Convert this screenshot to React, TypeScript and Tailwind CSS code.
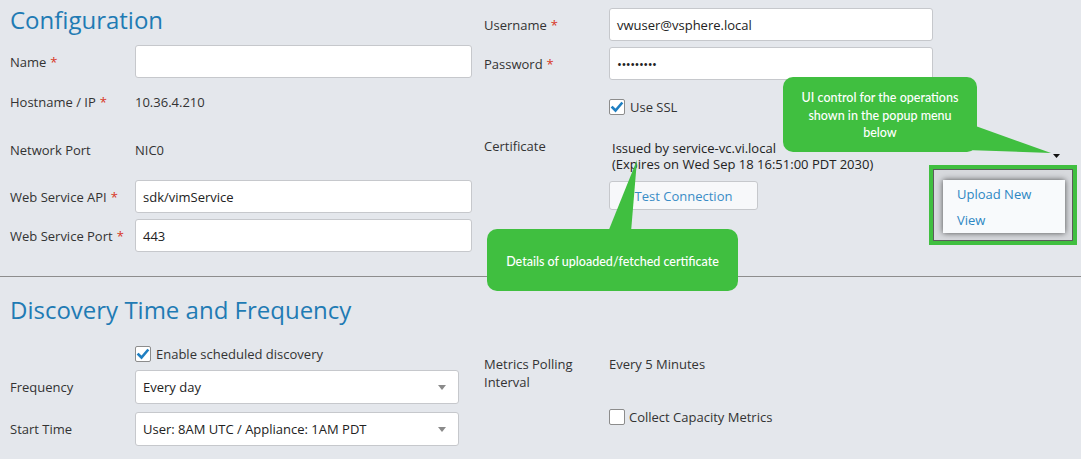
import React from "react";

const Req = () => <span className="ml-[4px] text-[#d8361f]">*</span>;

function CheckBox({ checked }: { checked?: boolean }) {
  return (
    <span className="flex h-[16px] w-[16px] shrink-0 items-center justify-center rounded-[2px] border border-[#8c8c8c] bg-white">
      {checked && (
        <svg width="14" height="14" viewBox="0 0 14 14">
          <polyline
            points="2.5,7.5 5.5,10.5 11.5,3.5"
            fill="none"
            stroke="#1f7fc2"
            strokeWidth="2.6"
            strokeLinecap="square"
          />
        </svg>
      )}
    </span>
  );
}

function TextBox({ value, width }: { value?: string; width: string }) {
  return (
    <div
      className={`flex h-[33px] items-center rounded-[3px] border border-[#c6c8cc] bg-white px-[7px] pt-[2px] text-[13px] text-[#222] ${width}`}
    >
      {value}
    </div>
  );
}

function SelectBox({ value }: { value: string }) {
  return (
    <div className="flex h-[34px] w-[324px] items-center rounded-[3px] border border-[#c6c8cc] bg-white pl-[7px] pr-[12px] pt-[1px] text-[13px] text-[#222]">
      <span className="flex-1">{value}</span>
      <svg width="8" height="5" viewBox="0 0 8 5">
        <polygon points="0,0 8,0 4,5" fill="#8a8a8a" />
      </svg>
    </div>
  );
}

function Row({
  label,
  required,
  children,
  className = "",
}: {
  label: string;
  required?: boolean;
  children?: React.ReactNode;
  className?: string;
}) {
  return (
    <div className={`flex items-center ${className}`}>
      <div className="w-[125px] shrink-0 pt-[2px] text-[13px] text-[#333]">
        {label}
        {required && <Req />}
      </div>
      {children}
    </div>
  );
}

export default function App() {
  return (
    <div
      className="relative h-[459px] w-full overflow-hidden bg-[#e4e7ec] text-[#333]"
      style={{ fontFamily: '"Open Sans", "Liberation Sans", sans-serif' }}
    >
      {/* Configuration */}
      <div className="flex h-[252px]">
        <div className="w-[474px] pl-[10px]">
          <h2 className="mt-[2px] h-[36px] text-[24px] leading-[36px] text-[#1f7bb4]">
            Configuration
          </h2>
          <Row label="Name" required className="mt-[7px] h-[33px]">
            <TextBox width="w-[337px]" />
          </Row>
          <Row label="Hostname / IP" required className="mt-[7px] h-[33px]">
            <span className="pt-[2px] text-[13px] text-[#333]">10.36.4.210</span>
          </Row>
          <Row label="Network Port" className="mt-[15px] h-[33px]">
            <span className="pt-[2px] text-[13px] text-[#333]">NIC0</span>
          </Row>
          <Row label="Web Service API" required className="mt-[14px] h-[33px]">
            <TextBox value="sdk/vimService" width="w-[337px]" />
          </Row>
          <Row label="Web Service Port" required className="mt-[6px] h-[33px]">
            <TextBox value="443" width="w-[337px]" />
          </Row>
        </div>

        <div className="flex-1 pl-[10px]">
          <Row label="Username" required className="mt-[8px] h-[33px]">
            <TextBox value="vwuser@vsphere.local" width="w-[324px]" />
          </Row>
          <Row label="Password" required className="mt-[6px] h-[33px]">
            <TextBox value="•••••••••" width="w-[324px] text-[10px] tracking-[-0.5px]" />
          </Row>
          <div className="mt-[19px] flex h-[16px] items-center pl-[125px]">
            <CheckBox checked />
            <span className="ml-[5px] pt-[2px] text-[13px] text-[#333]">Use SSL</span>
          </div>
          <div className="mt-[25px] flex items-start">
            <div className="-mt-[2px] w-[125px] shrink-0 text-[13px] leading-[16px]">
              Certificate
            </div>
            <div className="text-[13px] leading-[16px] text-[#222]">
              <div className="pl-[3px]">Issued by service-vc.vi.local</div>
              <div className="pl-[3px]">(Expires on Wed Sep 18 16:51:00 PDT 2030)</div>
            </div>
            <svg className="ml-auto mr-[21px] mt-[14px]" width="7" height="4" viewBox="0 0 7 4">
              <polygon points="0,0 7,0 3.5,4" fill="#111" />
            </svg>
          </div>
          <button className="ml-[125px] mt-[9px] flex h-[29px] w-[149px] items-center justify-center rounded-[3px] border border-[#c6c8cc] bg-[#f7f8fa] pt-[2px] text-[13px] text-[#3a8cc6]">
            Test Connection
          </button>
        </div>
      </div>

      <div className="mt-[24px] h-px w-full bg-[#8d8d8d]" />

      {/* Discovery */}
      <h2 className="mt-[15px] h-[36px] pl-[10px] text-[24px] leading-[36px] text-[#1f7bb4]">
        Discovery Time and Frequency
      </h2>
      <div className="flex">
        <div className="w-[474px] pl-[10px]">
          <div className="mt-[18px] flex h-[16px] items-center pl-[125px]">
            <CheckBox checked />
            <span className="ml-[5px] pt-[2px] text-[13px] text-[#333]">Enable scheduled discovery</span>
          </div>
          <Row label="Frequency" className="mt-[8px] h-[34px]">
            <SelectBox value="Every day" />
          </Row>
          <Row label="Start Time" className="mt-[8px] h-[34px]">
            <SelectBox value="User: 8AM UTC / Appliance: 1AM PDT" />
          </Row>
        </div>
        <div className="flex-1 pl-[10px] pt-[27px]">
          <div className="flex items-start text-[13px] leading-[18px]">
            <div className="w-[125px] shrink-0 pr-[30px]">Metrics Polling Interval</div>
            <div>Every 5 Minutes</div>
          </div>
          <div className="mt-[18px] flex h-[16px] items-center pl-[125px]">
            <CheckBox />
            <span className="ml-[4px] pt-[2px] text-[13px] text-[#333]">Collect Capacity Metrics</span>
          </div>
        </div>
      </div>

      {/* annotation tails */}
      <svg className="pointer-events-none absolute inset-0" width="1081" height="459">
        <polygon points="970,124 966,150 1051,153" fill="#40bf40" />
        <polygon points="608,232 631,232 637,160" fill="#40bf40" />
      </svg>

      {/* annotation callouts */}
      <div
        className="absolute left-[783px] top-[77px] flex h-[75px] w-[194px] items-center justify-center rounded-[10px] bg-[#40bf40] pt-[2px] text-center text-[12.5px] font-medium leading-[17.5px] text-white"
        style={{ fontFamily: 'Lato, "Open Sans", sans-serif' }}
      >
        UI control for the operations
        <br />
        shown in the popup menu
        <br />
        below
      </div>
      <div
        className="absolute left-[487px] top-[229px] flex h-[62px] w-[251px] items-center justify-center rounded-[10px] bg-[#40bf40] pt-[5px] text-[12.5px] font-medium text-white"
        style={{ fontFamily: 'Lato, "Open Sans", sans-serif' }}
      >
        Details of uploaded/fetched certificate
      </div>

      {/* highlighted popup menu */}
      <div className="absolute left-[929px] top-[165px] h-[80px] w-[148px] border-4 border-[#40bf40]">
        <div className="h-full w-full border border-[#5c5c5c] bg-[#d7d9dd] pl-[9px] pt-[10px]">
          <div className="h-[53px] w-[122px] bg-[#f8fafc] pl-[14px] pt-[6px] text-[13px] leading-[16px] text-[#2d87c3] shadow-[0_0_6px_rgba(0,0,0,0.65)]">
            <div>Upload New</div>
            <div className="mt-[10px]">View</div>
          </div>
        </div>
      </div>
    </div>
  );
}
